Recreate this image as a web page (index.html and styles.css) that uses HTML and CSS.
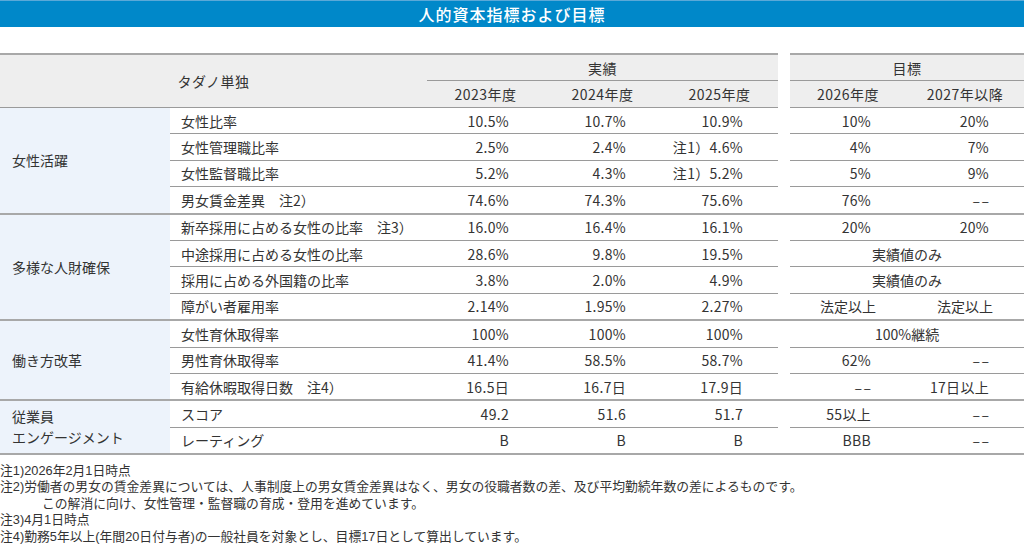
FILE: index.html
```html
<!DOCTYPE html>
<html lang="ja">
<head>
<meta charset="utf-8">
<link rel="stylesheet" href="styles.css">
</head>
<body>
<div class="title">人的資本指標および目標</div>
<table class="kpi">
  <colgroup>
    <col class="c-grp"><col class="c-item"><col class="c-val"><col class="c-val"><col class="c-val"><col class="c-sp"><col class="c-t1"><col class="c-t2">
  </colgroup>
  <thead>
    <tr class="h1">
      <th class="corner" colspan="2" rowspan="2">タダノ単独</th>
      <th class="top" colspan="3">実績</th>
      <td class="sp" rowspan="2"></td>
      <th class="top" colspan="2">目標</th>
    </tr>
    <tr class="h2">
      <th>2023年度</th><th>2024年度</th><th>2025年度</th>
      <th>2026年度</th><th>2027年以降</th>
    </tr>
  </thead>
  <tbody>
    <tr>
      <td class="grp end" rowspan="4">女性活躍</td>
      <td class="item">女性比率</td><td class="v">10.5%</td><td class="v">10.7%</td><td class="v">10.9%</td><td class="sp"></td><td class="v">10%</td><td class="v">20%</td>
    </tr>
    <tr>
      <td class="item">女性管理職比率</td><td class="v">2.5%</td><td class="v">2.4%</td><td class="v">注1）4.6%</td><td class="sp"></td><td class="v">4%</td><td class="v">7%</td>
    </tr>
    <tr>
      <td class="item">女性監督職比率</td><td class="v">5.2%</td><td class="v">4.3%</td><td class="v">注1）5.2%</td><td class="sp"></td><td class="v">5%</td><td class="v">9%</td>
    </tr>
    <tr class="end">
      <td class="item">男女賃金差異　注2）</td><td class="v">74.6%</td><td class="v">74.3%</td><td class="v">75.6%</td><td class="sp"></td><td class="v">76%</td><td class="v dash">––</td>
    </tr>
    <tr>
      <td class="grp end" rowspan="4">多様な人財確保</td>
      <td class="item">新卒採用に占める女性の比率　注3）</td><td class="v">16.0%</td><td class="v">16.4%</td><td class="v">16.1%</td><td class="sp"></td><td class="v">20%</td><td class="v">20%</td>
    </tr>
    <tr>
      <td class="item">中途採用に占める女性の比率</td><td class="v">28.6%</td><td class="v">9.8%</td><td class="v">19.5%</td><td class="sp"></td><td class="c" colspan="2">実績値のみ</td>
    </tr>
    <tr>
      <td class="item">採用に占める外国籍の比率</td><td class="v">3.8%</td><td class="v">2.0%</td><td class="v">4.9%</td><td class="sp"></td><td class="c" colspan="2">実績値のみ</td>
    </tr>
    <tr class="end">
      <td class="item">障がい者雇用率</td><td class="v">2.14%</td><td class="v">1.95%</td><td class="v">2.27%</td><td class="sp"></td><td class="c">法定以上</td><td class="c">法定以上</td>
    </tr>
    <tr>
      <td class="grp end" rowspan="3">働き方改革</td>
      <td class="item">女性育休取得率</td><td class="v">100%</td><td class="v">100%</td><td class="v">100%</td><td class="sp"></td><td class="c" colspan="2">100%継続</td>
    </tr>
    <tr>
      <td class="item">男性育休取得率</td><td class="v">41.4%</td><td class="v">58.5%</td><td class="v">58.7%</td><td class="sp"></td><td class="v">62%</td><td class="v dash">––</td>
    </tr>
    <tr class="end">
      <td class="item">有給休暇取得日数　注4）</td><td class="v">16.5日</td><td class="v">16.7日</td><td class="v">17.9日</td><td class="sp"></td><td class="v dash">––</td><td class="v">17日以上</td>
    </tr>
    <tr>
      <td class="grp end two" rowspan="2"><span class="l">従業員</span><span class="l">エンゲージメント</span></td>
      <td class="item">スコア</td><td class="v">49.2</td><td class="v">51.6</td><td class="v">51.7</td><td class="sp"></td><td class="v">55以上</td><td class="v dash">––</td>
    </tr>
    <tr class="end">
      <td class="item">レーティング</td><td class="v">B</td><td class="v">B</td><td class="v">B</td><td class="sp"></td><td class="v">BBB</td><td class="v dash">––</td>
    </tr>
  </tbody>
</table>
<div class="notes">
  <p>注1)2026年2月1日時点</p>
  <p>注2)労働者の男女の賃金差異については、人事制度上の男女賃金差異はなく、男女の役職者数の差、及び平均勤続年数の差によるものです。</p>
  <p class="indent">この解消に向け、女性管理・監督職の育成・登用を進めています。</p>
  <p>注3)4月1日時点</p>
  <p>注4)勤務5年以上(年間20日付与者)の一般社員を対象とし、目標17日として算出しています。</p>
</div>
</body>
</html>
```

FILE: styles.css
```css
html, body {
  margin: 0;
  padding: 0;
  background: #ffffff;
}
body {
  font-family: "Noto Sans CJK JP", "Noto Sans", sans-serif;
  color: #333333;
  width: 1024px;
}
.title {
  height: 26px;
  border-top: 1px solid #5aa9d8;
  background: #0088c9;
  color: #ffffff;
  font-size: 16px;
  line-height: 26px;
  letter-spacing: 1px;
  text-align: center;
  font-weight: 500;
}
.kpi {
  margin-top: 26px;
  width: 1024px;
  table-layout: fixed;
  border-collapse: separate;
  border-spacing: 0;
  font-size: 14px;
}
.c-grp { width: 170px; }
.c-item { width: 257px; }
.c-val { width: 117px; }
.c-sp { width: 12px; }
.c-t1 { width: 116px; }
.c-t2 { width: 118px; }

.kpi th {
  background: #eeeeee;
  font-weight: 400;
  padding: 0;
  text-align: center;
  letter-spacing: 0.5px;
  border-bottom: 1px solid #9a9a9a;
}
.kpi th.top, .kpi th.corner {
  border-top: 2px solid #a8a8a8;
}
.h1 th { height: 25px; }
.h2 th { height: 26px; }

.kpi td {
  padding: 0;
  height: 25.4px;
  border-bottom: 1px solid #9a9a9a;
  white-space: nowrap;
}
.kpi tr.end td {
  border-bottom: 2px solid #a8a8a8;
}
.kpi td.sp {
  border: none;
  background: transparent;
}
.kpi td.grp {
  background: #edf3fb;
  padding-left: 12px;
  vertical-align: middle;
  border-bottom: 2px solid #a8a8a8;
}
.kpi td.grp .l {
  display: block;
  line-height: 21px;
}
.kpi td.item {
  padding-left: 11px;
}
.kpi td.v {
  text-align: right;
  padding-right: 35px;
  letter-spacing: 0.3px;
}
.kpi td.c {
  text-align: center;
}
.kpi td.v.dash {
  letter-spacing: 1.5px;
  padding-right: 33.5px;
}

.notes {
  margin-top: 8px;
  font-family: "Liberation Sans", "Noto Sans CJK JP", sans-serif;
  font-size: 12.8px;
  line-height: 16.4px;
  color: #333333;
}
.notes p {
  margin: 0;
}
.notes p.indent {
  padding-left: 42px;
}
```
